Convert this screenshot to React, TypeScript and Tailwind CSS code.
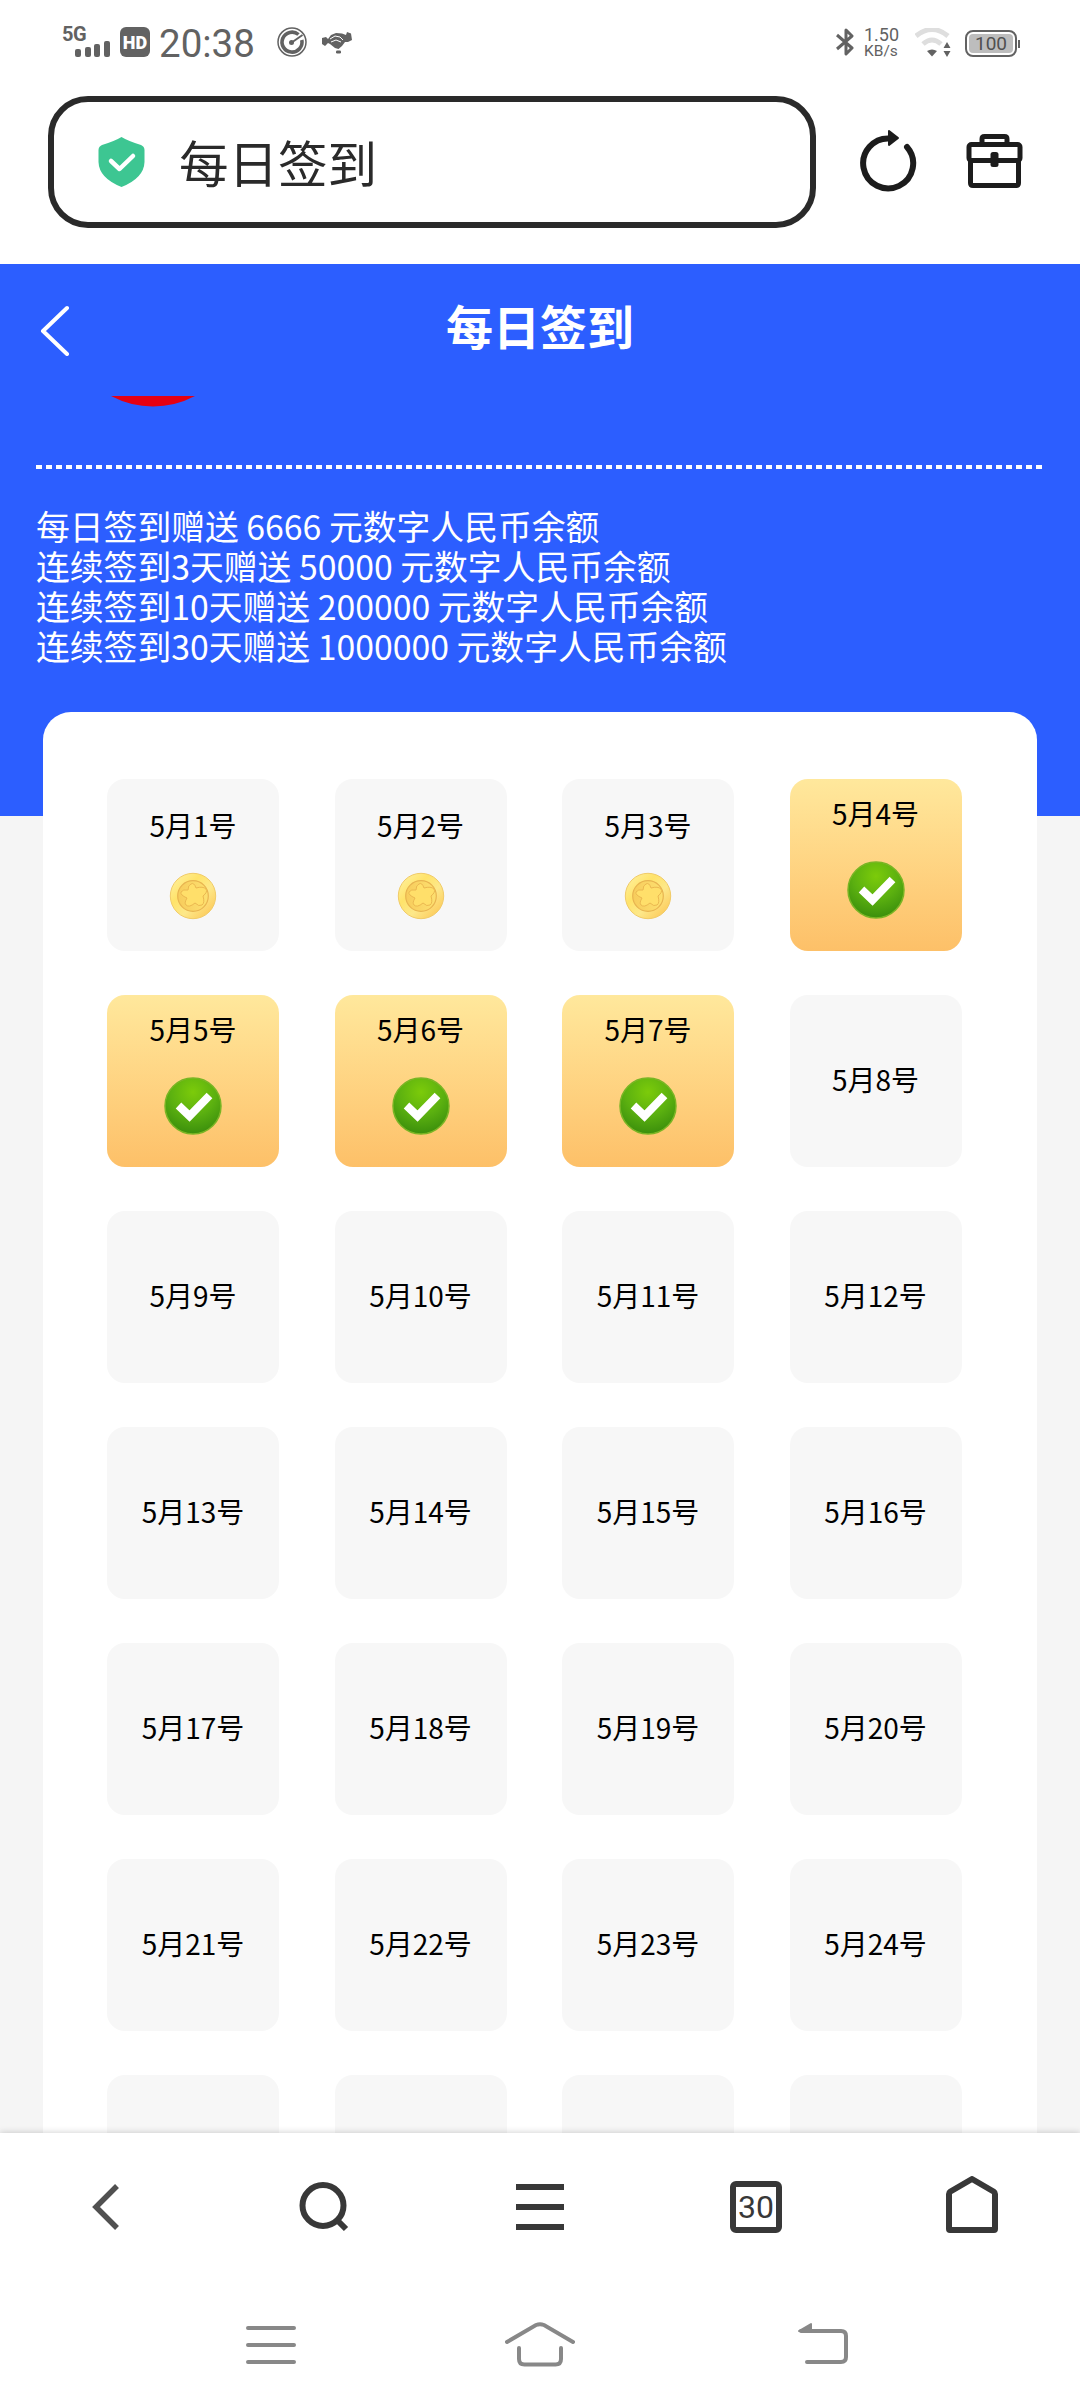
import type { ReactNode } from "react";

type DayState = "missed" | "signed" | "pending";

const DAYS = Array.from({ length: 24 }, (_, i) => {
  const day = i + 1;
  const state: DayState = day <= 3 ? "missed" : day <= 7 ? "signed" : "pending";
  return { day, state };
});

const RULES = [
  "每日签到赠送 6666 元数字人民币余额",
  "连续签到3天赠送 50000 元数字人民币余额",
  "连续签到10天赠送 200000 元数字人民币余额",
  "连续签到30天赠送 1000000 元数字人民币余额",
];

function StatusBar() {
  return (
    <div className="flex h-[84px] justify-between pr-[60px] pl-[62px] font-[Roboto,sans-serif] text-[#626262]">
      <div className="flex">
        <div className="mt-[26px] w-[58px]">
          <div className="h-[14px] text-[20px] leading-[16px] font-bold tracking-tight">5G</div>
          <svg className="ml-[13px]" width="36" height="17" viewBox="0 0 36 17" fill="currentColor">
            <rect x="0" y="9" width="6" height="8" rx="2" />
            <rect x="10" y="7" width="6" height="10" rx="2" />
            <rect x="19" y="4" width="6" height="13" rx="2" />
            <rect x="29" y="1" width="6" height="16" rx="2" />
          </svg>
        </div>
        <div className="mt-[27px] flex h-[30px] w-[30px] items-center justify-center rounded-md bg-[#626262] text-[18px] font-black text-white">
          HD
        </div>
        <div className="mt-[22px] ml-[9px] w-[118px] text-[38.500px] leading-[44px]">20:38</div>
        <svg className="mt-[27px]" width="30" height="30" viewBox="0 0 30 30" fill="none" stroke="currentColor">
          <circle cx="15" cy="15" r="14" strokeWidth="1.500" />
          <path d="M21.500 7.500A10 10 0 1 0 24.800 13" strokeWidth="3.600" />
          <path d="M14 16 25.500 8" strokeWidth="2" />
          <circle cx="14.500" cy="15.500" r="2.500" fill="currentColor" stroke="none" />
        </svg>
        <svg className="mt-[32px] ml-[15px]" width="30" height="22" viewBox="0 0 30 22" fill="currentColor">
          <path d="M0 6 4 5 6 7 9 3 14 1 20 1.500 24 3 25 0 29 1.500 30 8 26 10 23 10 20 14 16.500 17 13 16 8 12 6 11 3 14 0 12Z" />
          <path d="M8 7 13 4 18 5 21 8M9 10 14 8 19 10" fill="none" stroke="#fff" strokeWidth="1" />
          <rect x="14" y="18.500" width="5" height="3" rx="1.200" />
        </svg>
      </div>

      <div className="flex">
        <svg className="mt-[28px]" width="20" height="28" viewBox="0 0 20 28" fill="none" stroke="currentColor" strokeWidth="3" strokeLinejoin="round">
          <path d="M1 7 16 20 10 26V2L16 8 1 21" />
        </svg>
        <div className="mt-[26px] ml-[8px] w-[51px]">
          <div className="text-[18px] leading-[17px]">1.50</div>
          <div className="text-[15.500px] leading-[17px]">KB/s</div>
        </div>
        <svg className="mt-[28px]" width="36" height="30" viewBox="0 0 36 30" fill="none">
          <path d="M1 8Q17-5 33 8" stroke="#dedede" strokeWidth="5" />
          <path d="M8 16Q17 8 26 16" stroke="#dedede" strokeWidth="5" />
          <path d="M12 23Q17 20 22 23L17 28.500Z" fill="#626262" />
          <path d="M32 14 35.500 20H28.500ZM32 29 28.500 23H35.500Z" fill="#626262" />
        </svg>
        <div className="mt-[30px] ml-[14px] flex h-[27px] items-center">
          <div className="flex h-[27px] w-[52px] items-center justify-center rounded-lg border-[2.500px] border-[#626262] p-0.5">
            <div className="flex h-full w-full items-center justify-center rounded-sm bg-[#bdbdbd] text-[19px] leading-none text-[#505050]">
              100
            </div>
          </div>
          <div className="ml-px h-2 w-0.5 bg-[#626262]" />
        </div>
      </div>
    </div>
  );
}

function AddressBar() {
  return (
    <div className="flex h-[180px] items-start pt-3 pl-12 text-[#1c1c1c]">
      <div className="flex h-[132px] w-[768px] items-center rounded-[40px] border-[6px] border-[#2a2a2a] pl-11">
        <svg width="47" height="50" viewBox="0 0 47 50" fill="none">
          <path d="M23.500 0Q30 4 43 8Q46.500 9.500 46.500 13V25Q46 41 23.500 50Q1 41 .5 25V13Q.5 9.500 4 8Q17 4 23.500 0Z" fill="#3dc692" />
          <path d="M13 24 21.500 32 35 19" stroke="#fff" strokeWidth="4.500" strokeLinecap="round" strokeLinejoin="round" />
        </svg>
        <span className="ml-[34px] text-[49.500px] leading-none text-[#2a2a2a]">每日签到</span>
      </div>
      <svg className="mt-[33px] ml-[43px]" width="58" height="64" viewBox="0 0 58 64" fill="none" stroke="currentColor">
        <path d="M48 18A25 25 0 1 1 31 9.500" strokeWidth="6" strokeLinecap="round" />
        <path d="M30 2 39 9 30 16Z" fill="currentColor" strokeWidth="2" strokeLinejoin="round" />
      </svg>
      <svg className="mt-[36px] ml-[48px]" width="60" height="58" viewBox="0 0 60 58" fill="none" stroke="currentColor" strokeWidth="5">
        <path d="M17 11V7Q17 4.500 19.500 4.500H39.500Q42 4.500 42 7V11" />
        <rect x="4" y="12.500" width="51" height="16" rx="2.500" />
        <path d="M5.500 28V51Q5.500 53.500 8 53.500H51Q53.500 53.500 53.500 51V28" />
        <rect x="25.500" y="20" width="8" height="15" rx="2.500" fill="currentColor" stroke="none" />
      </svg>
    </div>
  );
}

function CoinIcon() {
  return (
    <svg width="48" height="48" viewBox="0 0 48 48">
      <defs>
        <linearGradient id="coin" x1="0" y1="0" x2="1" y2="1">
          <stop offset="0" stopColor="#fff3a8" />
          <stop offset="0.350" stopColor="#ffe36a" />
          <stop offset="0.600" stopColor="#fde88a" />
          <stop offset="1" stopColor="#fcc04a" />
        </linearGradient>
        <linearGradient id="coinFace" x1="0" y1="0" x2="1" y2="0">
          <stop offset="0" stopColor="#f7cc5c" />
          <stop offset="1" stopColor="#fde070" />
        </linearGradient>
      </defs>
      <circle cx="24" cy="24" r="22.700" fill="url(#coin)" stroke="#f1cb68" />
      <circle cx="24" cy="24" r="15.300" fill="url(#coinFace)" stroke="#e8b450" strokeWidth="1.200" />
      <path
        d="M22 12Q25 10 27 16Q34 14 37 17Q39 20 34 24Q36 31 33 33Q30 35 26 31Q20 36 17 33Q15 31 18 26Q11 23 12 20Q14 17 19 18Q19 13 22 12Z"
        fill="#ffdf6a"
        stroke="#ebb850"
      />
    </svg>
  );
}

function SignedIcon() {
  return (
    <svg width="58" height="58" viewBox="0 0 58 58">
      <defs>
        <radialGradient id="signed" cx="0.500" cy="0.250" r="0.750">
          <stop offset="0" stopColor="#7ccb0a" />
          <stop offset="0.550" stopColor="#5bb010" />
          <stop offset="1" stopColor="#3b8f0c" />
        </radialGradient>
      </defs>
      <circle cx="29" cy="29" r="28" fill="url(#signed)" stroke="#79b524" strokeWidth="1.500" />
      <path d="M14.500 28.500 25.500 39 45.500 18.500" fill="none" stroke="#fff" strokeWidth="8" />
    </svg>
  );
}

function DayTile({ day, state }: { day: number; state: DayState }) {
  const label = <span className="text-[28px] leading-[34px] text-black">5月{day}号</span>;

  if (state === "signed") {
    return (
      <div className="flex h-[172px] flex-col items-center rounded-[18px] bg-linear-to-b from-[#ffe89c] to-[#fdc068] pt-[17px]">
        {label}
        <div className="mt-[31px]">
          <SignedIcon />
        </div>
      </div>
    );
  }

  if (state === "missed") {
    return (
      <div className="flex h-[172px] flex-col items-center rounded-[18px] bg-[#f7f7f7] pt-[29px]">
        {label}
        <div className="mt-[30px]">
          <CoinIcon />
        </div>
      </div>
    );
  }

  return <div className="flex h-[172px] items-center justify-center rounded-[18px] bg-[#f7f7f7] pb-1">{label}</div>;
}

function CheckInPage() {
  return (
    <main className="h-[1869px] overflow-hidden bg-[#f5f5f5]">
      <header className="h-[552px] bg-[#2c5eff] text-white">
        <div className="grid h-[132px] grid-cols-3 items-center">
          <svg className="ml-[39px]" width="32" height="52" viewBox="0 0 32 52" fill="none" stroke="currentColor" strokeWidth="4" strokeLinecap="round" strokeLinejoin="round">
            <path d="M28 4 4 27 28 50" />
          </svg>
          <h1 className="pb-3 text-center text-[47px] leading-none font-bold">每日签到</h1>
        </div>
        {/* bottom edge of the logo, scrolled under the title bar */}
        <div className="ml-[111px] h-[69px]">
          <svg width="84" height="11" viewBox="0 0 84 11">
            <path d="M0 0H84Q64 10.500 42 10.500T0 0Z" fill="#e60012" />
          </svg>
        </div>
        <div className="mx-9 h-1 bg-[repeating-linear-gradient(90deg,#fff_0_6px,transparent_6px_10px)]" />
        <div className="mt-[37px] ml-9 text-[33.800px] leading-[40px]">
          {RULES.map((rule) => (
            <p key={rule}>{rule}</p>
          ))}
        </div>
      </header>

      <section className="relative mx-[43px] -mt-[104px] rounded-t-[28px] bg-white pt-[67px] pb-16 pl-16">
        <div className="grid grid-cols-[repeat(4,172px)] gap-x-[55.500px] gap-y-11">
          {DAYS.map((d) => (
            <DayTile key={d.day} {...d} />
          ))}
          {/* next row peeks out above the toolbar */}
          {[0, 1, 2, 3].map((i) => (
            <div key={i} className="h-[172px] rounded-[18px] bg-[#f7f7f7]" />
          ))}
        </div>
      </section>
    </main>
  );
}

function ToolbarItem({ children }: { children: ReactNode }) {
  return <div className="flex h-16 w-[216px] items-center justify-center">{children}</div>;
}

function BrowserToolbar() {
  return (
    <nav className="relative flex h-[147px] bg-white pt-[42px] text-[#383838] shadow-[0_-1px_6px_rgba(0,0,0,0.16)]">
      <ToolbarItem>
        <svg className="mr-1" width="30" height="48" viewBox="0 0 30 48" fill="none" stroke="#505050" strokeWidth="5.500">
          <path d="M26 3 5 24 26 45" />
        </svg>
      </ToolbarItem>
      <ToolbarItem>
        <svg width="52" height="54" viewBox="0 0 52 54" fill="none" stroke="currentColor" strokeWidth="6">
          <circle cx="25" cy="25.500" r="20.500" />
          <path d="M39 40 48 49" />
        </svg>
      </ToolbarItem>
      <ToolbarItem>
        <svg width="48" height="46" viewBox="0 0 48 46" stroke="currentColor" strokeWidth="6">
          <path d="M0 3H48M0 23H48M0 43H48" />
        </svg>
      </ToolbarItem>
      <ToolbarItem>
        <div className="flex h-[52px] w-[52px] items-center justify-center rounded-md border-[6px] border-[#383838] font-[Roboto,sans-serif] text-[32px] leading-none">
          30
        </div>
      </ToolbarItem>
      <ToolbarItem>
        <svg className="mb-1" width="52" height="58" viewBox="0 0 52 58" fill="none" stroke="currentColor" strokeWidth="6" strokeLinejoin="round">
          <path d="M3 18Q3 16.500 4.500 15.500L26 3 47.500 15.500Q49 16.500 49 18V53Q49 54 48 54H4Q3 54 3 53Z" />
        </svg>
      </ToolbarItem>
    </nav>
  );
}

function SystemNav() {
  return (
    <div className="relative flex h-32 items-start bg-white pt-[41px] pl-[244px] text-[#888]">
      <svg width="54" height="48" viewBox="0 0 54 48" stroke="currentColor" strokeWidth="4" strokeLinecap="round">
        <path d="M4 7H50M4 24H50M4 41H50" />
      </svg>
      <svg className="ml-[207px]" width="70" height="48" viewBox="0 0 70 48" fill="none" stroke="currentColor" strokeWidth="4" strokeLinecap="round">
        <path d="M2 21 31 4Q35 2.500 39 4L68 21" />
        <path d="M14 27V38Q14 43.500 19.500 43.500H50.500Q56 43.500 56 38V27" />
      </svg>
      <svg className="ml-[220px]" width="56" height="48" viewBox="0 0 56 48" fill="none" stroke="currentColor" strokeWidth="4" strokeLinecap="round">
        <path d="M6 10H46Q51 10 51 15V36Q51 41 46 41H12" />
        <path d="M4 10 16 3V10Z" fill="currentColor" strokeWidth="2" strokeLinejoin="round" />
      </svg>
    </div>
  );
}

export default function App() {
  return (
    <div className="h-[2408px] w-[1080px] overflow-hidden bg-white font-['Noto_Sans_CJK_SC',sans-serif]">
      <StatusBar />
      <AddressBar />
      <CheckInPage />
      <BrowserToolbar />
      <SystemNav />
    </div>
  );
}
